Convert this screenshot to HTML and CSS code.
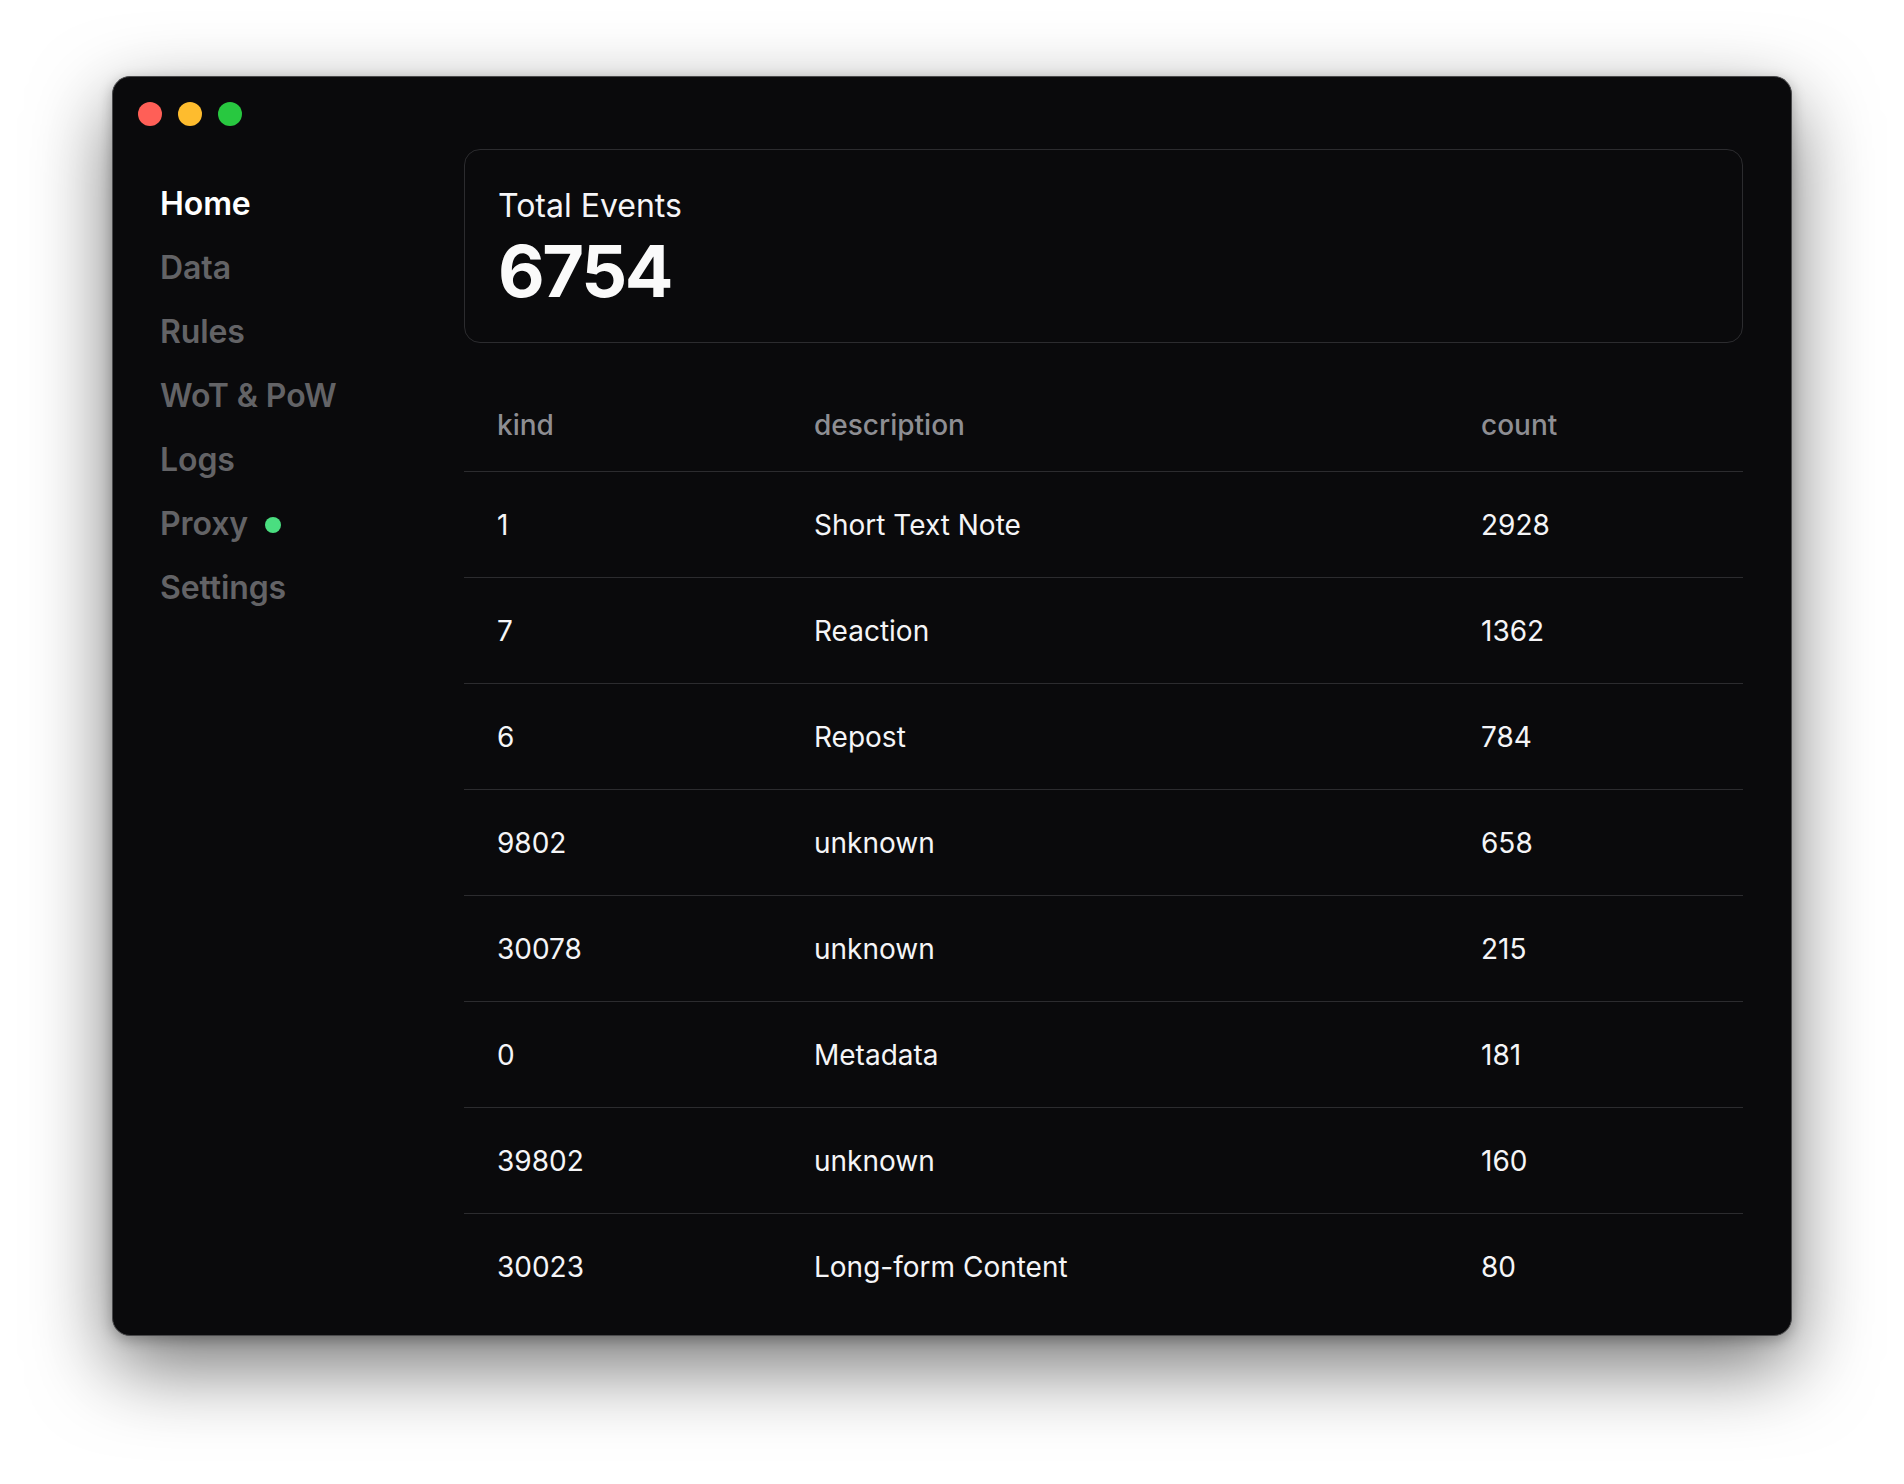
FILE: index.html
```html
<!DOCTYPE html>
<html lang="en">
<head>
<meta charset="utf-8">
<title>Dashboard</title>
<link rel="stylesheet" href="styles.css">
</head>
<body>
<div class="window">
  <div class="titlebar">
    <span class="light red"></span>
    <span class="light yellow"></span>
    <span class="light green"></span>
  </div>
  <div class="body">
    <nav class="sidebar">
      <a class="nav-item active">Home</a>
      <a class="nav-item">Data</a>
      <a class="nav-item">Rules</a>
      <a class="nav-item">WoT &amp; PoW</a>
      <a class="nav-item">Logs</a>
      <a class="nav-item">Proxy <span class="status-dot"></span></a>
      <a class="nav-item">Settings</a>
    </nav>
    <main class="main">
      <section class="card">
        <div class="card-title">Total Events</div>
        <div class="card-value">6754</div>
      </section>
      <table class="events">
        <colgroup>
          <col class="col-kind">
          <col class="col-desc">
          <col class="col-count">
        </colgroup>
        <thead>
          <tr><th>kind</th><th>description</th><th>count</th></tr>
        </thead>
        <tbody>
          <tr><td>1</td><td>Short Text Note</td><td>2928</td></tr>
          <tr><td>7</td><td>Reaction</td><td>1362</td></tr>
          <tr><td>6</td><td>Repost</td><td>784</td></tr>
          <tr><td>9802</td><td>unknown</td><td>658</td></tr>
          <tr><td>30078</td><td>unknown</td><td>215</td></tr>
          <tr><td>0</td><td>Metadata</td><td>181</td></tr>
          <tr><td>39802</td><td>unknown</td><td>160</td></tr>
          <tr><td>30023</td><td>Long-form Content</td><td>80</td></tr>
        </tbody>
      </table>
    </main>
  </div>
</div>
</body>
</html>
```

FILE: styles.css
```css
html, body {
  margin: 0;
  padding: 0;
  background: #ffffff;
}

body {
  font-family: Inter, "Noto Sans", sans-serif;
  width: 1904px;
  height: 1484px;
  overflow: hidden;
  padding-top: 76px;
  box-sizing: border-box;
}

.window {
  width: 1680px;
  height: 1260px;
  margin: 0 auto;
  box-sizing: border-box;
  background: #0a0a0c;
  border: 1px solid #4a4a4c;
  border-radius: 18px;
  overflow: hidden;
  box-shadow: 0 30px 80px 0 rgba(0, 0, 0, 0.55), 0 4px 14px rgba(0, 0, 0, 0.25);
  display: flex;
  flex-direction: column;
}

.titlebar {
  height: 72px;
  flex: none;
  display: flex;
  align-items: flex-start;
  gap: 16px;
  padding: 25px 0 0 25px;
  box-sizing: border-box;
}

.light {
  width: 24px;
  height: 24px;
  border-radius: 50%;
  display: block;
}
.red { background: #ff5f57; }
.yellow { background: #febc2e; }
.green { background: #28c840; }

.body {
  flex: 1;
  display: flex;
  min-height: 0;
}

.sidebar {
  width: 351px;
  flex: none;
  box-sizing: border-box;
  padding: 34.6px 0 0 47px;
  display: flex;
  flex-direction: column;
  gap: 24px;
}

.nav-item {
  display: flex;
  align-items: center;
  font-size: 32px;
  line-height: 40px;
  font-weight: 600;
  color: #636366;
  letter-spacing: -0.1px;
}

.nav-item.active {
  color: #ffffff;
}

.status-dot {
  width: 16px;
  height: 16px;
  border-radius: 50%;
  background: #4ade80;
  margin-left: 17px;
  margin-top: 2px;
}

.main {
  width: 1279px;
  flex: none;
}

.card {
  border: 1px solid #2c2c2f;
  border-radius: 16px;
  padding: 37px 33px 35px;
  height: 194px;
  box-sizing: border-box;
}

.card-title {
  font-size: 32px;
  line-height: 38.4px;
  font-weight: 400;
  color: #f5f5f7;
}

.card-value {
  margin-top: 10px;
  font-size: 72px;
  line-height: 72px;
  font-weight: 700;
  color: #fafafa;
  letter-spacing: -2.4px;
}

.events {
  width: 100%;
  margin-top: 27px;
  border-collapse: collapse;
  table-layout: fixed;
  font-size: 28px;
}

.col-kind { width: 317px; }
.col-desc { width: 667px; }
.col-count { width: 295px; }

.events th {
  text-align: left;
  font-weight: 500;
  color: #8e8e93;
  height: 101px;
  padding: 36px 0 25px 33px;
  box-sizing: border-box;
  line-height: 35px;
  border-bottom: 1px solid #2c2c2f;
}

.events td {
  height: 106px;
  padding: 2px 0 0 33px;
  box-sizing: border-box;
  color: #f5f5f7;
  line-height: 35px;
  border-bottom: 1px solid #2c2c2f;
}

.events tbody tr:last-child td {
  border-bottom: none;
}
```
